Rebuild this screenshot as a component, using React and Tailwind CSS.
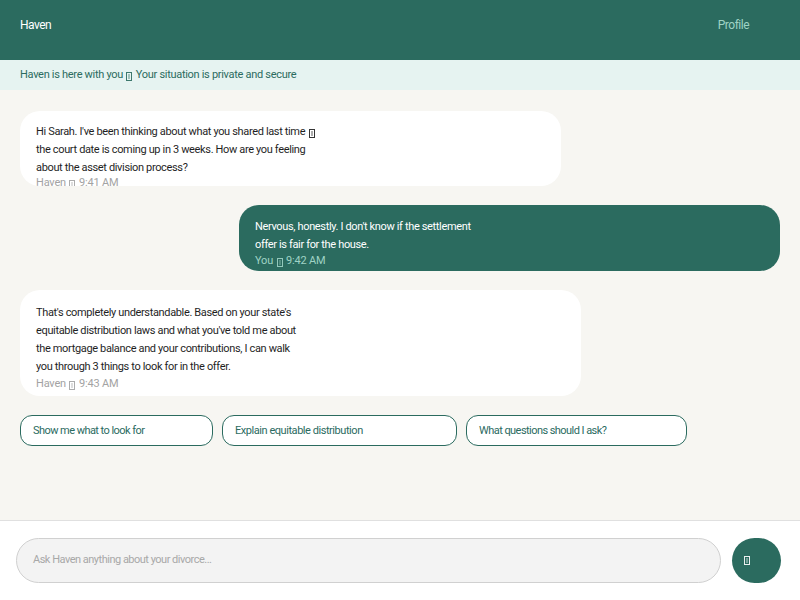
import React from "react";

function T() {
  return (
    <span className="inline-flex items-center justify-center align-[-1px] w-[6px] h-[9px] border border-current mx-[1px] opacity-90">
      <span className="block w-[2px] h-[5px] bg-current opacity-40" />
    </span>
  );
}

export default function App() {
  const font = { fontFamily: "Roboto, 'Liberation Sans', sans-serif" };
  return (
    <div className="w-[800px] h-[600px] flex flex-col bg-[#f7f6f2] overflow-hidden" style={font}>
      <header className="h-[60px] bg-[#2b6b5f] flex items-start justify-between pl-5 pr-[51px] pt-[17px] shrink-0">
        <span className="text-white text-[12px] leading-[16px] tracking-[-0.5px]">Haven</span>
        <span className="text-[#9fd3c5] text-[12px] leading-[16px] tracking-[-0.5px]">Profile</span>
      </header>
      <div className="h-[30px] bg-[#e6f3f1] flex items-center px-5 shrink-0">
        <span className="text-[#2b6b5f] text-[11px] tracking-[-0.3px]">Haven is here with you <T /> Your situation is private and secure</span>
      </div>
      <main className="flex-1 flex flex-col px-5 pt-[21px]">
        <div className="w-[541px] h-[75px] bg-white rounded-[20px] overflow-hidden px-4 pt-[12px]">
          <p className="w-[290px] text-[11px] leading-[18px] text-[#1f1f1f] tracking-[-0.35px]">
            Hi Sarah. I've been thinking about what you shared last time <T /> the court date is coming up in 3 weeks. How are you feeling about the asset division process?
          </p>
          <div className="text-[11px] leading-[12px] text-[#a3a3a3] tracking-[-0.2px]">Haven <T /> 9:41 AM</div>
        </div>
        <div className="self-end w-[541px] h-[66px] bg-[#2b6b5f] rounded-[20px] overflow-hidden px-4 pt-[13px] mt-[19px]">
          <p className="w-[225px] text-[11px] leading-[18px] text-white tracking-[-0.35px]">
            Nervous, honestly. I don't know if the settlement offer is fair for the house.
          </p>
          <div className="text-[11px] leading-[14px] text-[#9fd3c5] tracking-[-0.2px]">You <T /> 9:42 AM</div>
        </div>
        <div className="w-[561px] h-[106px] bg-white rounded-[20px] overflow-hidden px-4 pt-[14px] mt-[19px]">
          <p className="w-[270px] text-[11px] leading-[18px] text-[#1f1f1f] tracking-[-0.35px]">
            That's completely understandable. Based on your state's equitable distribution laws and what you've told me about the mortgage balance and your contributions, I can walk you through 3 things to look for in the offer.
          </p>
          <div className="text-[11px] leading-[14px] text-[#a3a3a3] tracking-[-0.2px] mt-[1px]">Haven <T /> 9:43 AM</div>
        </div>
        <div className="flex gap-[9px] mt-[19px]">
          <button className="w-[193px] h-[31px] border border-[#2b6b5f] rounded-[12px] bg-white text-left px-3 pt-[1px] text-[11px] text-[#2b6b5f] tracking-[-0.55px]">Show me what to look for</button>
          <button className="w-[235px] h-[31px] border border-[#2b6b5f] rounded-[12px] bg-white text-left px-3 pt-[1px] text-[11px] text-[#2b6b5f] tracking-[-0.45px]">Explain equitable distribution</button>
          <button className="w-[221px] h-[31px] border border-[#2b6b5f] rounded-[12px] bg-white text-left px-3 pt-[1px] text-[11px] text-[#2b6b5f] tracking-[-0.55px]">What questions should I ask?</button>
        </div>
      </main>
      <footer className="h-[80px] shrink-0 bg-white border-t border-[#e0e0e0] flex items-start pt-[17px] pl-4 pr-[19px] gap-[11px]">
        <div className="w-[705px] h-[45px] rounded-full bg-[#f3f3f3] border border-[#d0d0d0] flex items-center px-4">
          <span className="text-[11px] text-[#a8a8a8] tracking-[-0.5px]">Ask Haven anything about your divorce...</span>
        </div>
        <button className="w-[49px] h-[45px] rounded-full bg-[#2b6b5f] text-white text-[11px] text-left pl-[11px] flex items-center"><T /></button>
      </footer>
    </div>
  );
}
